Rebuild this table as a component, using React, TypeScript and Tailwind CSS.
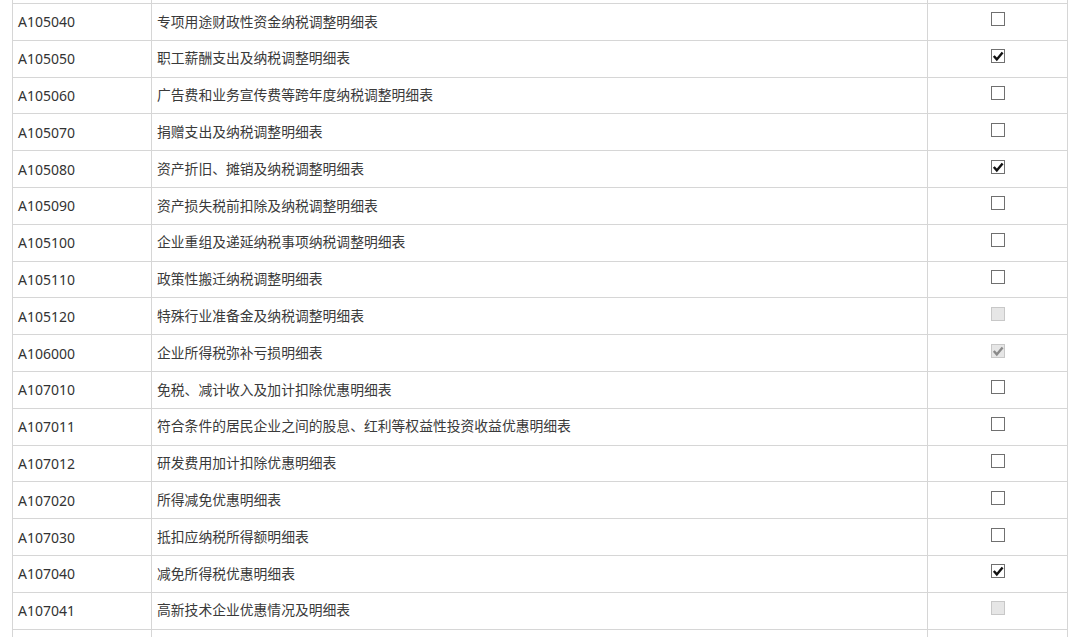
import React from "react";

type Mark = "off" | "on" | "disabled" | "disabledOn";

const rows: { code: string; name: string; mark: Mark }[] = [
  { code: "A105040", name: "专项用途财政性资金纳税调整明细表", mark: "off" },
  { code: "A105050", name: "职工薪酬支出及纳税调整明细表", mark: "on" },
  { code: "A105060", name: "广告费和业务宣传费等跨年度纳税调整明细表", mark: "off" },
  { code: "A105070", name: "捐赠支出及纳税调整明细表", mark: "off" },
  { code: "A105080", name: "资产折旧、摊销及纳税调整明细表", mark: "on" },
  { code: "A105090", name: "资产损失税前扣除及纳税调整明细表", mark: "off" },
  { code: "A105100", name: "企业重组及递延纳税事项纳税调整明细表", mark: "off" },
  { code: "A105110", name: "政策性搬迁纳税调整明细表", mark: "off" },
  { code: "A105120", name: "特殊行业准备金及纳税调整明细表", mark: "disabled" },
  { code: "A106000", name: "企业所得税弥补亏损明细表", mark: "disabledOn" },
  { code: "A107010", name: "免税、减计收入及加计扣除优惠明细表", mark: "off" },
  { code: "A107011", name: "符合条件的居民企业之间的股息、红利等权益性投资收益优惠明细表", mark: "off" },
  { code: "A107012", name: "研发费用加计扣除优惠明细表", mark: "off" },
  { code: "A107020", name: "所得减免优惠明细表", mark: "off" },
  { code: "A107030", name: "抵扣应纳税所得额明细表", mark: "off" },
  { code: "A107040", name: "减免所得税优惠明细表", mark: "on" },
  { code: "A107041", name: "高新技术企业优惠情况及明细表", mark: "disabled" },
];

function Box({ mark }: { mark: Mark }) {
  const disabled = mark === "disabled" || mark === "disabledOn";
  const checked = mark === "on" || mark === "disabledOn";
  return (
    <span
      className={
        disabled
          ? "flex h-[14px] w-[14px] items-center justify-center border border-[#c8c8c8] bg-[#e6e6e6]"
          : "flex h-[14px] w-[14px] items-center justify-center border border-[#707070] bg-white"
      }
    >
      {checked && (
        <svg width="12" height="12" viewBox="0 0 12 12">
          <path
            d="M1.8 6 L4.8 9.4 L10.6 2.4"
            fill="none"
            stroke={disabled ? "#8a8a8a" : "#111"}
            strokeWidth="2.4"
          />
        </svg>
      )}
    </span>
  );
}

function Row({ code, name, mark }: { code?: string; name?: string; mark?: Mark }) {
  return (
    <div className="grid h-[36.8px] w-[1056px] grid-cols-[139px_776px_141px] border-t border-[#d6d6d6]">
      <div className="flex items-center border-l border-[#d6d6d6] pl-[5px] text-[14px] text-[#333]">
        {code}
      </div>
      <div className="flex items-center border-l border-[#d6d6d6] pl-[5px] text-[13.8px] text-[#3a3a3a]">
        {name}
      </div>
      <div className="flex items-center justify-center border-x border-[#d6d6d6] pb-[5px]">
        {mark && <Box mark={mark} />}
      </div>
    </div>
  );
}

export default function App() {
  return (
    <div
      className="h-[637px] w-[1080px] overflow-hidden bg-white"
      style={{ fontFamily: '"Noto Sans", "Noto Sans CJK SC", sans-serif' }}
    >
      <div className="ml-[12px] mt-[-33.8px]">
        <Row />
        {rows.map((r) => (
          <Row key={r.code} code={r.code} name={r.name} mark={r.mark} />
        ))}
        <Row />
      </div>
    </div>
  );
}
